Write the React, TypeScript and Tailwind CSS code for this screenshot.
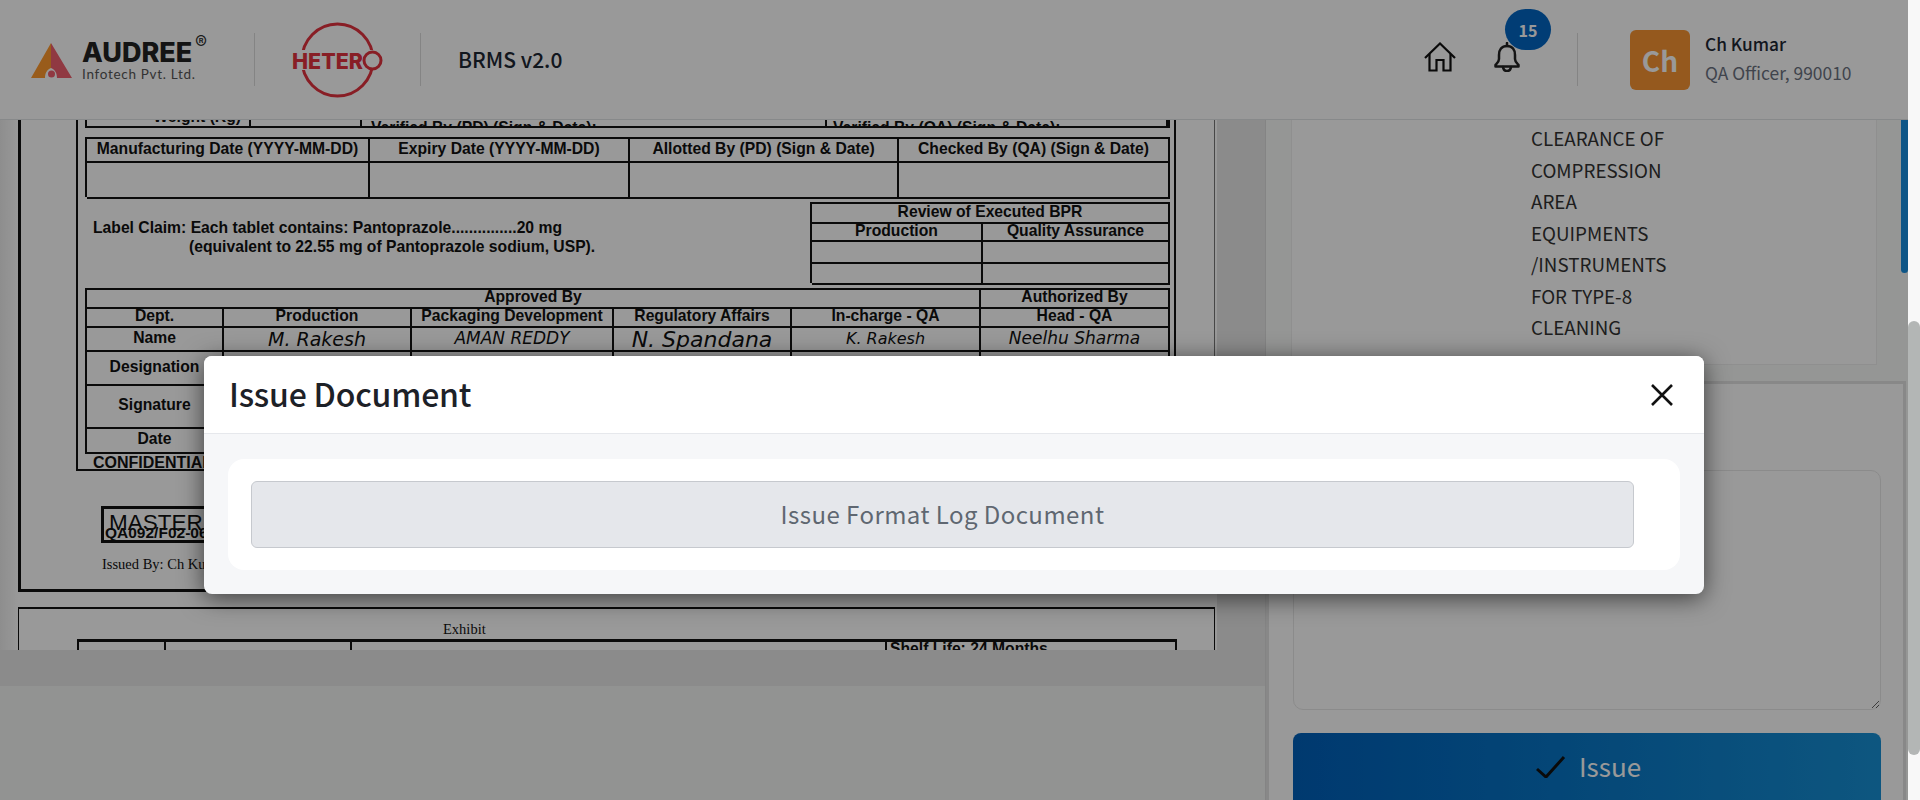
import React from 'react';

const sans = "font-['Noto_Sans_CJK_SC','Noto_Sans',sans-serif]";
const cell = 'flex items-center justify-center border-r-2 border-b-2 border-[#111] font-bold text-[15.7px] leading-none pb-[3px] whitespace-nowrap';
const cutCell = 'border-r-2 border-[#111] flex items-end overflow-hidden font-bold text-[15.7px] leading-[16px] whitespace-nowrap pb-[1px]';

function AudreeLogo() {
  return (
    <div className="flex items-start w-[175px] h-[45px]">
      <svg width="41" height="36" viewBox="0 0 41 36" className="mt-[6px]">
        <path d="M20 0 L0 35 L14 35 C14 29 17 26 20 25 Z" fill="#ff9a2e" />
        <path d="M20 0 L41 35 L26 35 C26 29 23 26 20 25 Z" fill="#f0606e" />
        <circle cx="20.5" cy="31" r="3.5" fill="#f0606e" />
      </svg>
      <div className="ml-[10px] relative font-['Inter',sans-serif]">
        <div className="text-[27px] leading-[27px] mt-[2px] font-extrabold text-[#222]">AUDREE</div>
        <div className="text-[13.5px] leading-[16px] text-[#555] font-['Lato',sans-serif] tracking-[0.7px] whitespace-nowrap">Infotech Pvt. Ltd.</div>
        <span className="absolute left-[113px] -top-[3px] text-[18px] leading-none text-[#333]">®</span>
      </div>
    </div>
  );
}

function HeteroLogo() {
  return (
    <svg width="92" height="76" viewBox="0 0 92 76">
      <ellipse cx="45.5" cy="38" rx="35.5" ry="36" fill="none" stroke="#e3323f" strokeWidth="3" />
      <rect x="0" y="28" width="92" height="20" fill="#fff" />
      <text x="0" y="47" fontFamily="Inter, sans-serif" fontWeight="800" fontSize="22" fill="#e3323f" textLength="71" lengthAdjust="spacingAndGlyphs">HETER</text>
      <circle cx="80.5" cy="38.5" r="8.5" fill="none" stroke="#e3323f" strokeWidth="3" />
    </svg>
  );
}

function HomeIcon() {
  return (
    <svg width="32" height="30" viewBox="0 0 32 30" fill="none" stroke="#111" strokeWidth="2.2" strokeLinejoin="miter">
      <path d="M1 16 L16 1.5 L31 16" />
      <path d="M5.5 12 V28.5 H12.5 V18 H19.5 V28.5 H26.5 V12" />
    </svg>
  );
}

function BellIcon() {
  return (
    <svg width="26" height="30" viewBox="0 0 26 30" fill="none" stroke="#222" strokeWidth="2.5" strokeLinejoin="round" strokeLinecap="round">
      <path d="M13 1 V4" />
      <path d="M13 4 C7.5 4 5 8 5 13 V17 C5 20 3 21.5 1.5 23 V24.5 H24.5 V23 C23 21.5 21 20 21 17 V13 C21 8 18.5 4 13 4 Z" />
      <path d="M9 25 C9.5 28 11 29 13 29 C15 29 16.5 28 17 25" />
    </svg>
  );
}

function Header() {
  return (
    <header className={`h-[120px] shrink-0 bg-white border-b border-[#e2e4e6] flex items-center ${sans} relative z-10`}>
      <div className="pl-[31px] w-[254px]">
        <AudreeLogo />
      </div>
      <div className="w-px h-[53px] bg-[#dddddd]" />
      <div className="ml-[37px] w-[128px]">
        <HeteroLogo />
      </div>
      <div className="w-px h-[53px] bg-[#dddddd]" />
      <div className="ml-[37px] text-[21px] font-medium text-[#1d2733]">BRMS v2.0</div>
      <div className="ml-auto flex items-center">
        <div className="-mt-[6px] -ml-[1px]">
          <HomeIcon />
        </div>
        <div className="relative ml-[38px] -mt-[5px]">
          <BellIcon />
          <span className="absolute left-[11px] -top-[33px] w-[46px] h-[41px] rounded-full bg-[#0266c4] text-white text-[16px] font-bold flex items-center justify-center">15</span>
        </div>
        <div className="ml-[57px] w-px h-[53px] bg-[#dddddd]" />
        <div className="ml-[52px] w-[60px] h-[60px] rounded-[6px] bg-[#f99532] text-white text-[28px] font-semibold flex items-center justify-center">Ch</div>
        <div className="ml-[15px] w-[203px] -mt-[3px]">
          <div className="text-[17.3px] leading-[29px] font-medium text-[#1d2733]">Ch Kumar</div>
          <div className="text-[17.4px] leading-[29px] text-[#6b7280]">QA Officer, 990010</div>
        </div>
      </div>
    </header>
  );
}

function Signed({ children, className }: { children: React.ReactNode; className?: string }) {
  return (
    <div className={`border-r-2 border-b-2 border-[#111] flex items-center justify-center overflow-hidden italic font-['DejaVu_Sans',sans-serif] font-light text-[#111] ${className ?? ''}`}>
      {children}
    </div>
  );
}

function ScannedDocument() {
  return (
    <div className="w-[1217px] h-[530px] overflow-hidden bg-[linear-gradient(90deg,#ececec_0,#ffffff_18px)] font-['Liberation_Sans',sans-serif] text-[#111] pl-[18px] pr-[2px]">
      <div className="h-[472px] border-l-[3px] border-b-[3px] border-[#111] pl-[55px] border-r border-r-dotted border-r-[#777]">
        <div className="w-[1100px] h-[351px] border-x-2 border-b-2 border-[#111]">
          <div className="ml-[7px] w-[1085px] h-[8px] border-b-2 border-l-2 border-r-2 border-[#111] grid grid-cols-[164px_111px_465px_1fr]">
            <div className={`${cutCell} justify-end pr-[8px]`}>Weight (Kg)</div>
            <div className={cutCell} />
            <div className={`${cutCell} pl-[9px] items-start pt-0`}>Verified By (PD) (Sign &amp; Date):</div>
            <div className={`${cutCell} pl-[6px] items-start pt-0`}>Verified By (QA) (Sign &amp; Date):</div>
          </div>
          <div className="ml-[7px] mt-[9px] w-[1085px] h-[60px] border-t-2 border-l-2 border-[#111] grid grid-cols-[283px_260px_269px_1fr] grid-rows-[24px_36px]">
            <div className={cell}>Manufacturing Date (YYYY-MM-DD)</div>
            <div className={cell}>Expiry Date (YYYY-MM-DD)</div>
            <div className={cell}>Allotted By (PD) (Sign &amp; Date)</div>
            <div className={cell}>Checked By (QA) (Sign &amp; Date)</div>
            <div className={cell} />
            <div className={cell} />
            <div className={cell} />
            <div className={cell} />
          </div>
          <div className="ml-[7px] mt-[5px] w-[1085px] flex justify-between h-[86px]">
            <div className="pl-[8px] pt-[16px] font-bold text-[15.7px] leading-[19px] whitespace-nowrap">
              <div>Label Claim: Each tablet contains: Pantoprazole...............20 mg</div>
              <div className="pl-[96px]">(equivalent to 22.55 mg of Pantoprazole sodium, USP).</div>
            </div>
            <div className="w-[360px] h-[81px] border-t-2 border-l-2 border-[#111] grid grid-cols-[171px_1fr] grid-rows-[20px_18px_22px_21px]">
              <div className={`${cell} col-span-2`}>Review of Executed BPR</div>
              <div className={cell}>Production</div>
              <div className={cell}>Quality Assurance</div>
              <div className={cell} />
              <div className={cell} />
              <div className={cell} />
              <div className={cell} />
            </div>
          </div>
          <div className="ml-[7px] w-[1085px] border-t-2 border-l-2 border-[#111] grid grid-cols-[137px_188px_202px_178px_189px_1fr] grid-rows-[19px_19px_24px_34px_43px_25px]">
            <div className={`${cell} col-span-5`}>Approved By</div>
            <div className={cell}>Authorized By</div>
            <div className={cell}>Dept.</div>
            <div className={cell}>Production</div>
            <div className={cell}>Packaging Development</div>
            <div className={cell}>Regulatory Affairs</div>
            <div className={cell}>In-charge - QA</div>
            <div className={cell}>Head - QA</div>
            <div className={cell}>Name</div>
            <Signed className="text-[19px]">M. Rakesh</Signed>
            <Signed className="text-[17px]">AMAN REDDY</Signed>
            <Signed className="text-[22px]">N. Spandana</Signed>
            <Signed className="text-[16px]">K. Rakesh</Signed>
            <Signed className="text-[17px]">Neelhu Sharma</Signed>
            <div className={cell}>Designation</div>
            <div className={cell} />
            <div className={cell} />
            <div className={cell} />
            <div className={cell} />
            <div className={cell} />
            <div className={cell}>Signature</div>
            <div className={cell} />
            <div className={cell} />
            <div className={cell} />
            <div className={cell} />
            <div className={cell} />
            <div className={cell}>Date</div>
            <div className={cell} />
            <div className={cell} />
            <div className={cell} />
            <div className={cell} />
            <div className={cell} />
          </div>
          <div className="ml-[15px] font-bold text-[16px] leading-[17px]">CONFIDENTIAL</div>
        </div>
        <div className="mt-[35px] ml-[25px] w-[300px] h-[37px] border-[3px] border-[#111] pl-[5px] overflow-hidden">
          <div className="text-[22.5px] leading-[25px] mt-[1px]">MASTER COPY</div>
          <div className="text-[15.5px] leading-[15px] font-bold -mt-[10px] -ml-[4px]">QA092/F02-06</div>
        </div>
        <div className="ml-[26px] mt-[12px] font-['Liberation_Serif',serif] text-[14.5px] leading-[18px]">Issued By: Ch Kumar</div>
      </div>
      <div className="mt-[15px] w-[1197px] h-[60px] border-x border-t-2 border-[#111]">
        <div className="pl-[424px] pt-[11px] font-['Liberation_Serif',serif] text-[14.5px] leading-[18px]">Exhibit</div>
        <div className="mt-[1px] ml-[58px] w-[1100px] h-[30px] border-x-2 border-t-[3px] border-[#111] grid grid-cols-[87px_186px_535px_1fr]">
          <div className="border-r-2 border-[#111]" />
          <div className="border-r-2 border-[#111]" />
          <div className="border-r-2 border-[#111]" />
          <div className="pl-[3px] font-bold text-[15.7px] leading-[14px] whitespace-nowrap">Shelf Life: 24 Months</div>
        </div>
      </div>
    </div>
  );
}

function Viewer() {
  return (
    <div className="w-[1266px] shrink-0 flex flex-col border-r border-[#dddddd]">
      <div className="h-[566px] shrink-0 bg-[#e8e8e8] overflow-hidden">
        <ScannedDocument />
      </div>
      <div className="flex-1 bg-[#f3f5f4]" />
    </div>
  );
}

function Sidebar() {
  return (
    <div className={`flex-1 relative ${sans} bg-[#f8faf9]`}>
      <div className="ml-[25px] mr-[31px] h-[245px] bg-white border-x border-b border-[#eeeeee] pl-[239px] pt-[2px] text-[18.8px] leading-[31.5px] text-[#333]">
        <div>CLEARANCE OF</div>
        <div>COMPRESSION</div>
        <div>AREA</div>
        <div>EQUIPMENTS</div>
        <div>/INSTRUMENTS</div>
        <div>FOR TYPE-8</div>
        <div>CLEANING</div>
      </div>
      <div className="mt-[16px] mr-[2px] h-[419px] bg-white border-[3px] border-b-0 border-[#e3e3e3] pl-[24px] pr-[22px] pt-[86px]">
        <textarea className="block w-full h-[240px] rounded-[10px] border border-[#e8e8e8] bg-white" />
        <div className="mt-[23px] h-[80px] rounded-[8px] bg-gradient-to-r from-[#0160ba] to-[#1790d5] flex items-start justify-center pt-[18px] text-white text-[26px] leading-[30px]">
          <svg width="30" height="22" viewBox="0 0 30 22" fill="none" stroke="#111" strokeWidth="3" className="mt-[5px] ml-[3px]">
            <path d="M1 13 L10 21 L28 1" />
          </svg>
          <span className="ml-[13px]">Issue</span>
        </div>
      </div>
      <div className="absolute right-0 top-0 w-[7px] h-[153px] rounded-b-[4px] bg-[#1a90e0]" />
    </div>
  );
}

function IssueModal() {
  return (
    <div className={`absolute inset-0 z-20 bg-black/40 flex justify-center pt-[356px] ${sans}`}>
      <div className="w-[1500px] h-[238px] rounded-[8px] bg-[#f6f7f9] shadow-[0_4px_24px_rgba(0,0,0,0.6)] overflow-hidden">
        <div className="h-[78px] bg-white border-b border-[#e6e8ec] flex items-center justify-between pl-[25px] pr-[31px]">
          <h2 className="text-[32px] font-medium text-[#1d2127] tracking-[-0.2px] pb-[3px]">Issue Document</h2>
          <svg width="22" height="22" viewBox="0 0 22 22" fill="none" stroke="#111" strokeWidth="2.6">
            <path d="M1 1 L21 21 M21 1 L1 21" />
          </svg>
        </div>
        <div className="mx-[24px] mt-[25px] rounded-[16px] bg-white pl-[23px] pr-[46px] py-[22px]">
          <div className="h-[67px] rounded-[6px] bg-[#e5e7eb] border border-[#c6c9ce] flex items-center justify-center text-[24px] tracking-[0.45px] text-[#5f6771] pb-[1px]">
            Issue Format Log Document
          </div>
        </div>
      </div>
    </div>
  );
}

export default function App() {
  return (
    <div className="h-[800px] overflow-hidden flex">
      <div className="w-[1908px] shrink-0 relative flex flex-col">
        <Header />
        <div className="flex-1 flex min-h-0">
          <Viewer />
          <Sidebar />
        </div>
        <IssueModal />
      </div>
      <div className="flex-1 bg-[#f8f8f8] relative">
        <div className="absolute left-0 right-0 top-[321px] h-[434px] rounded-full bg-[#b3b6b5]" />
      </div>
    </div>
  );
}
